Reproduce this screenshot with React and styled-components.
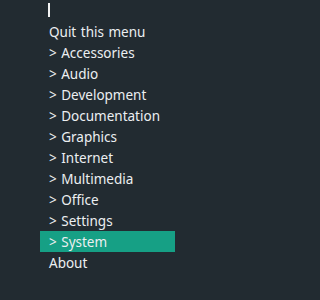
import React from "react";
import styled, { createGlobalStyle } from "styled-components";

const GlobalStyle = createGlobalStyle`
  html, body {
    margin: 0;
    padding: 0;
    background: #222b31;
  }
`;

const items = [
  "Quit this menu",
  "> Accessories",
  "> Audio",
  "> Development",
  "> Documentation",
  "> Graphics",
  "> Internet",
  "> Multimedia",
  "> Office",
  "> Settings",
  "> System",
  "About",
];

const App = () => {
  return (
    <Screen>
      <GlobalStyle />
      <Menu>
        <Prompt>
          <Caret />
        </Prompt>
        {items.map((label) => (
          <Item key={label} selected={label === "> System"}>
            {label}
          </Item>
        ))}
      </Menu>
    </Screen>
  );
};

export default App;

const Screen = styled.div`
  width: 300px;
  height: 300px;
  background: #222b31;
  padding-left: 40px;
  box-sizing: border-box;
`;

const Menu = styled.div`
  width: 135px;
  display: flex;
  flex-direction: column;
  font-family: "Noto Sans", sans-serif;
  font-size: 13.5px;
  word-spacing: 1px;
  color: #eceff1;
`;

const Prompt = styled.div`
  height: 21px;
  padding-left: 8px;
  display: flex;
  align-items: flex-start;
`;

const Caret = styled.span`
  display: block;
  width: 2px;
  height: 14px;
  margin-top: 3px;
  background: #f2f2f2;
`;

const Item = styled.div`
  height: 21px;
  line-height: 23px;
  padding-left: 9px;
  white-space: nowrap;
  background: ${(p) => (p.selected ? "#16a085" : "transparent")};
`;
